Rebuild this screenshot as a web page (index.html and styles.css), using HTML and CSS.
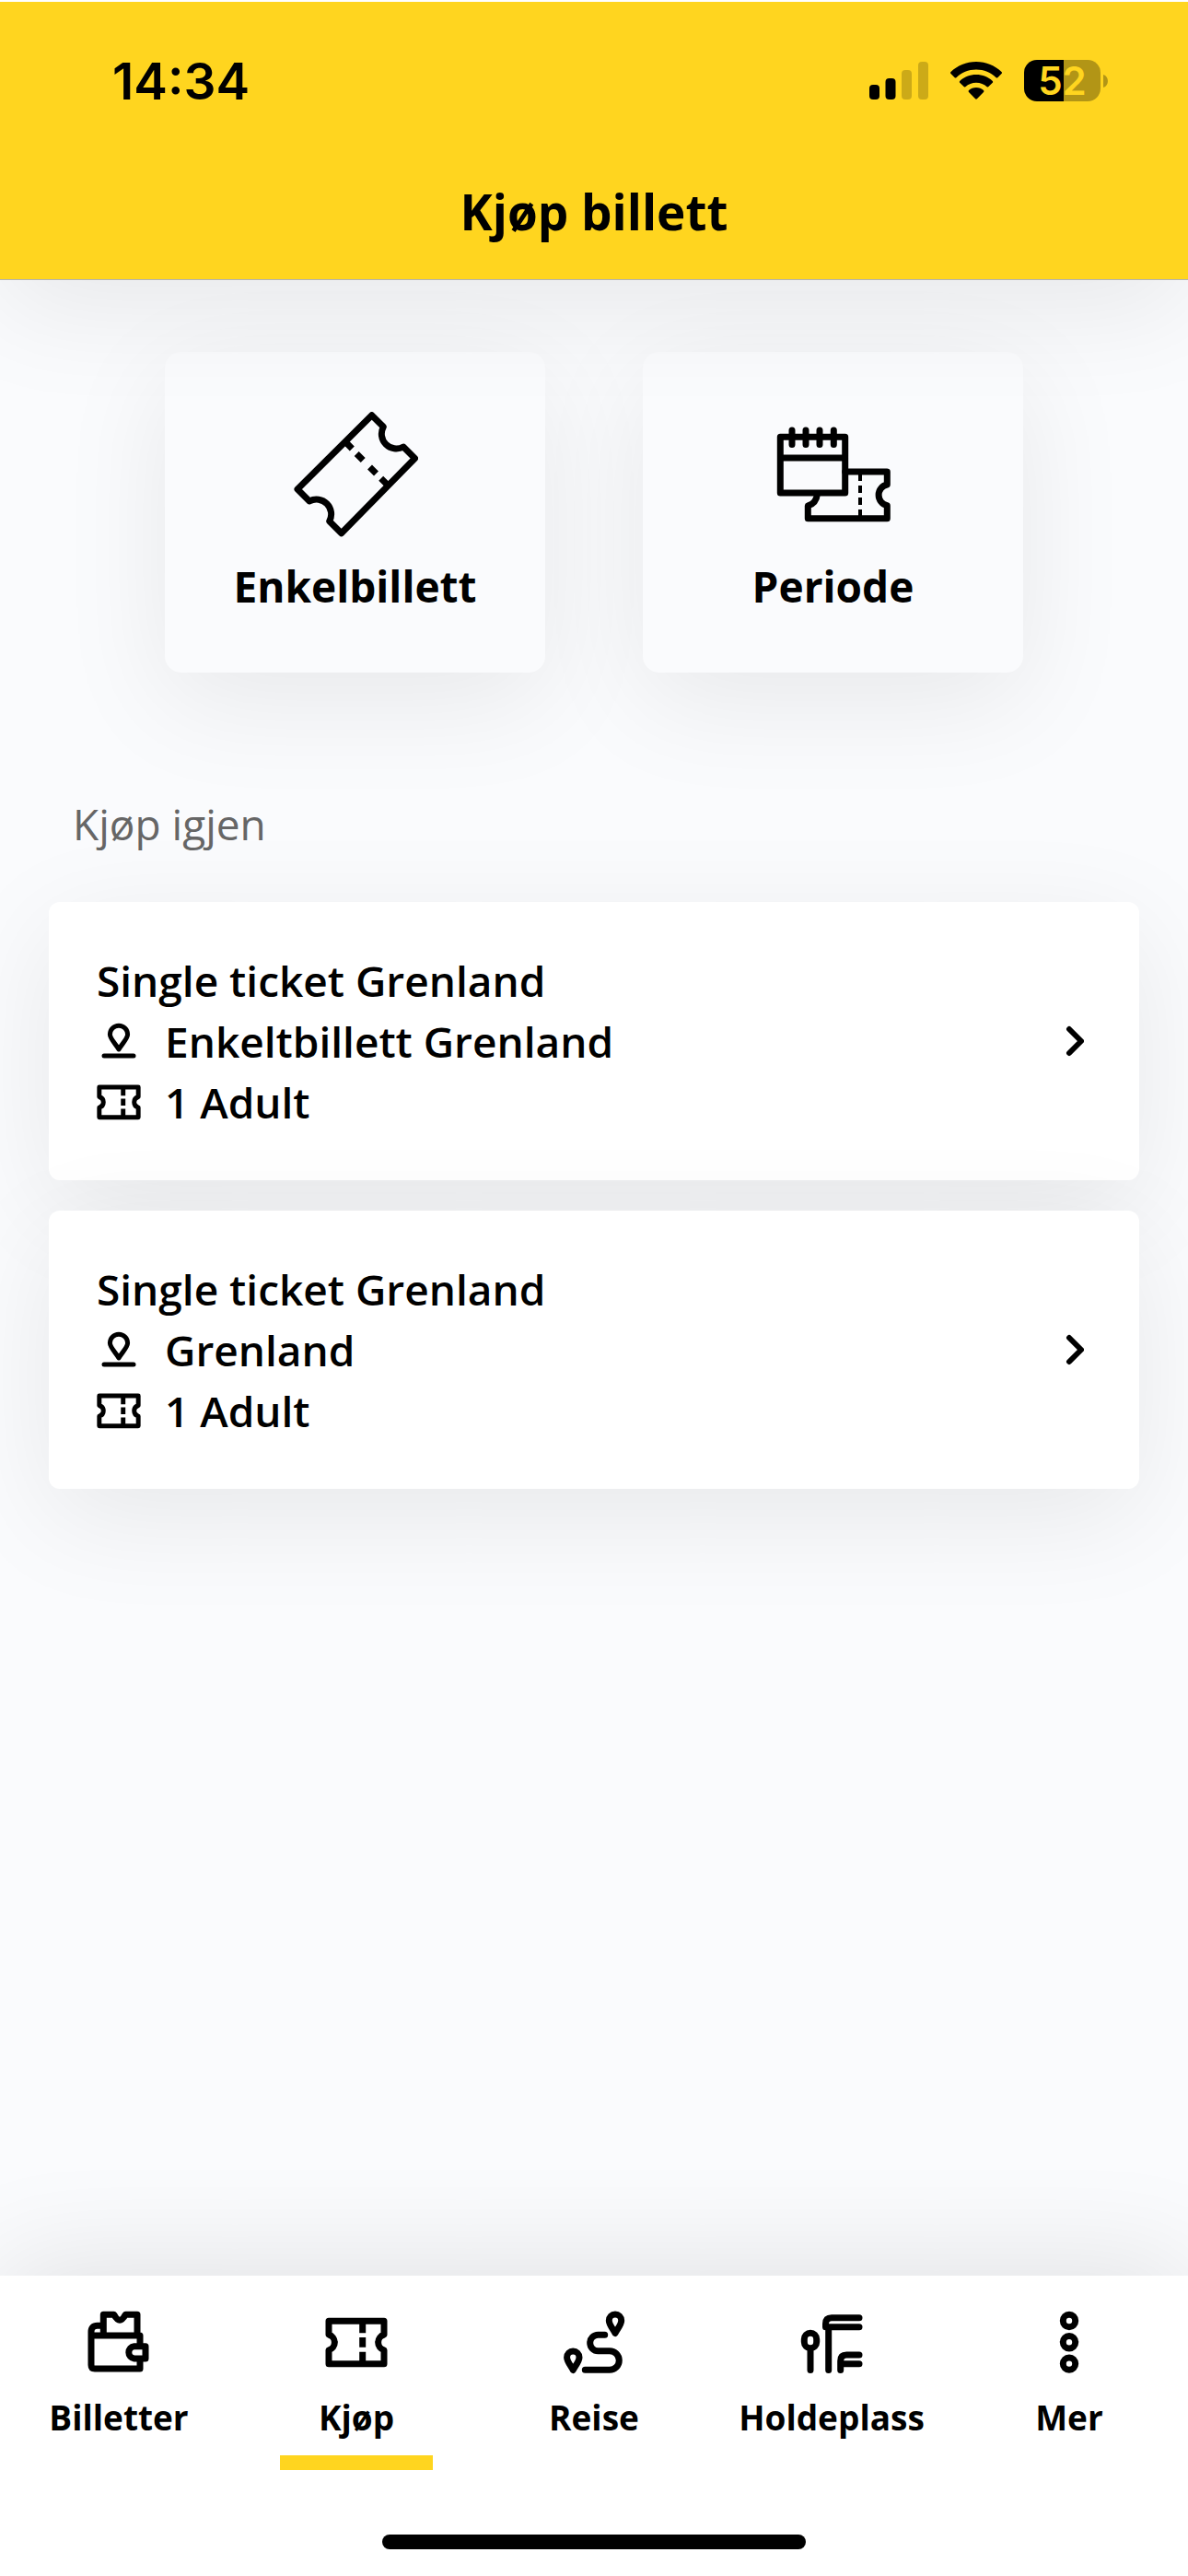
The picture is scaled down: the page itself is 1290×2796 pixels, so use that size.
FILE: index.html
```
<!DOCTYPE html>
<html lang="nb">
<head>
<meta charset="utf-8">
<meta name="viewport" content="width=device-width, initial-scale=1">
<title>Kjøp billett</title>
<link rel="stylesheet" href="styles.css">
</head>
<body>
<svg class="defs" aria-hidden="true">
  <defs>
    <g id="ticket">
      <path d="M6 13.3h60v14.9a8.6 8.6 0 0 0 0 16.6v14.9H6V44.8a8.6 8.6 0 0 0 0-16.6z"/>
      <path class="dash" d="M42.7 15v11.3M42.7 31v10.7M42.7 46.7V58"/>
    </g>
    <g id="place">
      <path d="M24 33C21 27.500 14.400 21.500 14.400 16.800a9.600 9.600 0 0 1 19.200 0c0 4.700-6.600 10.700-9.600 16.200z"/>
      <path d="M8 40h32"/>
    </g>
    <path id="chevron" d="M4 4l13 13-13 13"/>
  </defs>
</svg>

<header class="app-header">
  <div class="status-bar">
    <span class="time">14:34</span>
    <div class="status-icons">
      <svg class="signal" viewBox="0 0 64 42" aria-hidden="true">
        <rect x="0" y="25" width="11" height="16" rx="4"/>
        <rect x="17.500" y="18" width="11" height="23" rx="4"/>
        <rect class="faint" x="35" y="9" width="11" height="32" rx="4"/>
        <rect class="faint" x="53" y="0" width="11" height="41" rx="4"/>
      </svg>
      <svg class="wifi" viewBox="0 0 56 42" aria-hidden="true">
        <path d="M28 0C17.200 0 7.500 4.200.5 11q-1 1 0 2l4.200 4.200q.8.8 1.700 0C12 11.800 19.600 8.600 28 8.600s16 3.200 21.600 8.600q.9.800 1.700 0l4.200-4.200q1-1 0-2C48.500 4.200 38.800 0 28 0z"/>
        <path d="M28 14c-6.900 0-13 2.600-17.800 6.900q-.9.900 0 1.800l4.400 4.400q.8.800 1.700.1c3.200-2.800 7.200-4.500 11.700-4.500s8.500 1.700 11.700 4.500q.9.700 1.700-.1l4.400-4.400q.9-.9 0-1.800C41 16.600 34.900 14 28 14z"/>
        <path d="M28 28c-3.100 0-5.900 1.100-8 3q-1 .9 0 1.900l7.100 7.300q.9.900 1.800 0l7.100-7.300q1-1 0-1.900c-2.100-1.900-4.900-3-8-3z"/>
      </svg>
      <div class="battery">
        <span class="battery-level">52</span>
        <svg class="battery-tip" viewBox="0 0 5 14" aria-hidden="true"><path d="M0 0c6.600 2 6.600 12 0 14z"/></svg>
      </div>
    </div>
  </div>
  <h1 class="title">Kjøp billett</h1>
</header>

<main class="content">
  <div class="tiles">
    <button class="tile" type="button">
      <svg class="tile-icon" viewBox="0 0 136 136" aria-hidden="true">
        <path d="M85.700 3.700L98.300 16.300A16 16 0 0 0 120 38L132.500 50.500 52.700 131.700 39.700 118.700A16 16 0 0 0 18 97L5 84z"/>
        <path class="dash" d="M56 31.500l8.300 8.500M69.200 45.500l7 7M83.500 60l7 7M95.700 72.200l7.300 7.300"/>
      </svg>
      <span>Enkelbillett</span>
    </button>
    <button class="tile" type="button">
      <svg class="tile-icon" viewBox="0 0 136 136" aria-hidden="true">
        <path d="M10.300 27.300h70.400V88H10.300zM10.300 50h70.400M23 20v15.600M38 20v15.600M53 20v15.600M68.300 20v15.600"/>
        <path d="M80.700 65h45.600v14a11.600 11.600 0 0 0 0 22.700v14H40.300V102c6-1.500 9.500-6.500 10.200-13"/>
        <path class="dash dash-thin" d="M97 67v8M97 80v8M97 93v8M97 106v8"/>
      </svg>
      <span>Periode</span>
    </button>
  </div>

  <h2 class="section-title">Kjøp igjen</h2>

  <div class="list">
    <button class="row" type="button">
      <span class="row-text">
        <span>Single ticket Grenland</span>
        <span class="row-line"><svg class="row-icon" viewBox="0 0 48 48" aria-hidden="true"><use href="#place"/></svg>Enkeltbillett Grenland</span>
        <span class="row-line"><svg class="row-icon row-icon-ticket" viewBox="2 2 68 68" aria-hidden="true"><use href="#ticket"/></svg>1 Adult</span>
      </span>
      <svg class="chevron" viewBox="0 0 20 34" aria-hidden="true"><use href="#chevron"/></svg>
    </button>
    <button class="row" type="button">
      <span class="row-text">
        <span>Single ticket Grenland</span>
        <span class="row-line"><svg class="row-icon" viewBox="0 0 48 48" aria-hidden="true"><use href="#place"/></svg>Grenland</span>
        <span class="row-line"><svg class="row-icon row-icon-ticket" viewBox="2 2 68 68" aria-hidden="true"><use href="#ticket"/></svg>1 Adult</span>
      </span>
      <svg class="chevron" viewBox="0 0 20 34" aria-hidden="true"><use href="#chevron"/></svg>
    </button>
  </div>
</main>

<footer class="tab-bar">
  <nav class="tabs">
    <a class="tab" href="#billetter">
      <svg class="tab-icon" viewBox="0 0 72 72" aria-hidden="true">
        <path d="M59 40V29H6v32q0 4 4 4h49V55M6 31V25q0-6.700 6.700-6.700H19M19.300 28V6.300h11.400c2 3.500 4 6 6.300 6s4.300-2.500 6.300-6H56V28"/>
        <path d="M65 40.700H52.700a6.700 6.700 0 0 0 0 13.300H65z"/>
      </svg>
      <span>Billetter</span>
    </a>
    <a class="tab tab-active" href="#kjop" aria-current="page">
      <svg class="tab-icon" viewBox="0 0 72 72" aria-hidden="true"><use href="#ticket"/></svg>
      <span>Kjøp</span>
    </a>
    <a class="tab" href="#reise">
      <svg class="tab-icon" viewBox="0 0 72 72" aria-hidden="true">
        <path d="M13.300 66.500C11 62 6.600 57 6.600 52.700a6.700 6.700 0 0 1 13.400 0c0 4.300-4.400 9.300-6.700 13.800z"/>
        <path d="M59 26.500c-2.300-4.500-6.700-9.500-6.700-13.800a6.700 6.700 0 0 1 13.400 0C65.700 17 61.300 22 59 26.500z"/>
        <path d="M47.700 28.300h-7.300a8.700 8.700 0 0 0 0 17.400h12.600a10.300 10.300 0 0 1 0 20.600H26.300"/>
      </svg>
      <span>Reise</span>
    </a>
    <a class="tab" href="#holdeplass">
      <svg class="tab-icon" viewBox="0 0 72 72" aria-hidden="true">
        <rect x="6.300" y="26.300" width="13.400" height="16.400" rx="6.700"/>
        <path d="M13 44v22.500M32.700 20v46.500M66 9.700H36q-6.500 0-6.500 6.500v3.500H66M66 50H52.200q-6.500 0-6.500 6.500v10M46 59.700h20"/>
      </svg>
      <span>Holdeplass</span>
    </a>
    <a class="tab" href="#mer">
      <svg class="tab-icon" viewBox="0 0 72 72" aria-hidden="true">
        <circle cx="36" cy="13" r="6.700"/><circle cx="36" cy="36.300" r="6.700"/><circle cx="36" cy="59.600" r="6.700"/>
      </svg>
      <span>Mer</span>
    </a>
  </nav>
  <div class="home-indicator"></div>
</footer>
</body>
</html>
```
FILE: styles.css
```
:root {
  --yellow: #ffd51f;
  --page: #fafbfd;
  --shadow: 0 30px 120px rgba(0, 0, 0, 0.08);
}

* {
  box-sizing: border-box;
}

body {
  margin: 0;
  min-height: 100vh;
  display: flex;
  flex-direction: column;
  overflow-x: hidden;
  background: var(--page);
  color: #000;
  font-family: "Open Sans", sans-serif;
  font-size: 46px;
}

h1,
h2 {
  margin: 0;
}

button {
  border: 0;
  margin: 0;
  color: inherit;
  font: inherit;
  cursor: pointer;
}

svg {
  display: block;
  flex: none;
  fill: none;
  stroke: none;
  stroke-linecap: round;
  stroke-linejoin: round;
}

.defs {
  position: absolute;
  width: 0;
  height: 0;
}

.dash {
  stroke-linecap: butt;
}

.dash-thin {
  stroke-width: 4px;
}

/* Header */

.app-header {
  position: relative;
  z-index: 1;
  background: var(--yellow);
  border-top: 2px solid #fff;
  border-bottom: 1px solid #b2b2b2;
  box-shadow: var(--shadow);
}

.status-bar {
  display: flex;
  align-items: center;
  justify-content: space-between;
  height: 171px;
  padding: 0 87px 0 122px;
  font-family: Inter, sans-serif;
}

.time {
  font-size: 55px;
  font-weight: 600;
}

.status-icons {
  display: flex;
  align-items: center;
  gap: 24px;
}

.signal,
.wifi,
.battery-tip {
  fill: #000;
}

.signal {
  width: 64px;
  height: 42px;
}

.faint {
  opacity: 0.2;
}

.wifi {
  width: 56px;
  height: 42px;
}

.battery {
  display: flex;
  align-items: center;
  gap: 3px;
}

.battery-level {
  width: 83px;
  height: 45px;
  border-radius: 14px;
  background: linear-gradient(to right, #000 52%, #b29516 52%);
  color: var(--yellow);
  font-size: 42px;
  font-weight: 600;
  line-height: 45px;
  text-align: center;
}

.battery-tip {
  width: 5px;
  height: 14px;
  fill: #b29516;
}

.title {
  padding: 21px 24px 37px;
  font-size: 53px;
  font-weight: 700;
  line-height: 72px;
  text-align: center;
}

/* Content */

.content {
  flex: 1;
  padding: 78px 53px;
}

.tiles {
  display: grid;
  grid-template-columns: repeat(2, 413px);
  justify-content: center;
  gap: 106px;
}

.tile {
  display: flex;
  flex-direction: column;
  align-items: center;
  gap: 22px;
  padding: 65px 24px 63px;
  border-radius: 18px;
  background: var(--page);
  box-shadow: var(--shadow);
  font-size: 46px;
  font-weight: 700;
  line-height: 62px;
}

.tile-icon {
  width: 136px;
  height: 136px;
  stroke: #000;
  stroke-width: 7px;
}

.section-title {
  margin: 134px 0 55px;
  padding: 0 26px;
  color: #666;
  font-size: 46px;
  font-weight: 400;
  line-height: 60px;
}

.list {
  display: flex;
  flex-direction: column;
  gap: 33px;
}

.row {
  display: flex;
  align-items: center;
  justify-content: space-between;
  padding: 52px;
  border-radius: 12px;
  background: #fff;
  box-shadow: var(--shadow);
  font-size: 46px;
  font-weight: 600;
  line-height: 66px;
  text-align: left;
}

.row-text {
  display: flex;
  flex-direction: column;
}

.row-line {
  display: flex;
  align-items: center;
  gap: 26px;
}

.row-icon {
  width: 48px;
  height: 48px;
  stroke: #000;
  stroke-width: 5px;
}

.row-icon-ticket {
  stroke-width: 7px;
}

.chevron {
  width: 20px;
  height: 34px;
  margin-right: 8px;
  stroke: #000;
  stroke-width: 6px;
}

/* Tab bar */

.tab-bar {
  padding-bottom: 29px;
  background: #fff;
  box-shadow: 0 -12px 120px rgba(0, 0, 0, 0.1);
}

.tabs {
  display: grid;
  grid-template-columns: repeat(5, 1fr);
}

.tab {
  display: flex;
  flex-direction: column;
  align-items: center;
  gap: 19px;
  padding-top: 36px;
  color: inherit;
  font-size: 37px;
  font-weight: 700;
  line-height: 54px;
  text-decoration: none;
}

.tab::after {
  content: "";
  width: 166px;
  height: 16px;
  margin-top: -5px;
}

.tab-active::after {
  background: var(--yellow);
}

.tab-icon {
  width: 72px;
  height: 72px;
  stroke: #000;
  stroke-width: 7px;
}

.home-indicator {
  width: 460px;
  height: 16px;
  margin: 70px auto 0;
  border-radius: 8px;
  background: #000;
}
```
